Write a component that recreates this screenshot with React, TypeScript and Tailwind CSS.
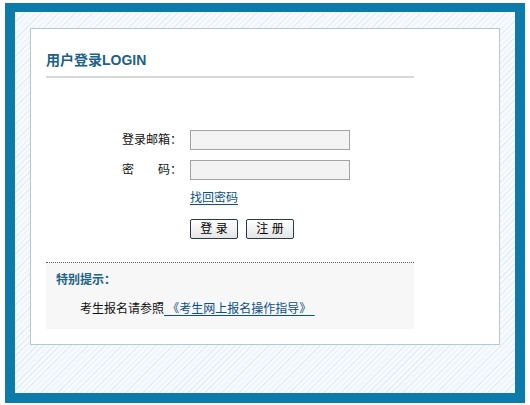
const font = 'font-["Liberation_Sans","Noto_Sans_CJK_SC",sans-serif]'

export default function App() {
  return (
    <div className={`min-h-[405px] bg-white pl-[5px] pt-[3px] ${font}`}>
      {/* outer blue frame with hatched background */}
      <div className="w-[520px] h-[400px] border-[10px] border-t-[9px] border-[#0c7bac] bg-[repeating-linear-gradient(135deg,#f6fafd_0px,#f6fafd_3px,#e3eef6_3px,#e3eef6_4px)] pl-[15px] pt-[16px]">
        <div className="w-[470px] h-[317px] border border-[#b7c7d1] bg-white px-[15px] pt-[21px] pb-[14px]">
          <div className="w-[368px]">
            {/* title */}
            <div className="pb-[6px] border-b-2 border-[#d8d8d8]">
              <h1 className="text-[14px] leading-[20px] font-bold text-[#1b6189]">用户登录LOGIN</h1>
            </div>

            {/* form */}
            <div className="mt-[52px] flex flex-col text-[12px] text-[#111]">
              <div className="flex items-center h-[20px]">
                <label className="w-[136px] text-right whitespace-pre">登录邮箱：</label>
                <input className="ml-[8px] w-[160px] h-[20px] border border-[#a3a3a3] bg-[#f3f3f3] outline-none" />
              </div>
              <div className="flex items-center h-[20px] mt-[10px]">
                <label className="w-[136px] text-right whitespace-pre">密{'\u3000\u3000'}码：</label>
                <input type="password" className="ml-[8px] w-[160px] h-[20px] border border-[#a3a3a3] bg-[#f3f3f3] outline-none" />
              </div>
              <div className="mt-[10px] pl-[144px] leading-[16px]">
                <a className="text-[#0b4f8d] underline underline-offset-2 cursor-pointer">找回密码</a>
              </div>
              <div className="mt-[13px] pl-[144px] flex gap-[8px]">
                <button className="w-[48px] h-[20px] rounded-[2px] border border-[#2b3a4a] bg-[linear-gradient(#ffffff,#e4e4e4)] text-[12px] leading-[18px] text-black whitespace-pre">登 录</button>
                <button className="w-[48px] h-[20px] rounded-[2px] border border-[#2b3a4a] bg-[linear-gradient(#ffffff,#e4e4e4)] text-[12px] leading-[18px] text-black whitespace-pre">注 册</button>
              </div>
            </div>

            {/* notice box */}
            <div className="mt-[23px] border-t border-dotted border-[#666] bg-[#f7f7f7] pt-[7px] pb-[10px] text-[12px]">
              <p className="pl-[10px] leading-[20px] font-bold text-[#1b6189]">特别提示：</p>
              <p className="mt-[9px] pl-[34px] leading-[20px] text-[#111] whitespace-pre">
                考生报名请参照<a className="text-[#0b4f8d] underline underline-offset-2 cursor-pointer"> 《考生网上报名操作指导》 </a>
              </p>
            </div>
          </div>
        </div>
      </div>
    </div>
  )
}
